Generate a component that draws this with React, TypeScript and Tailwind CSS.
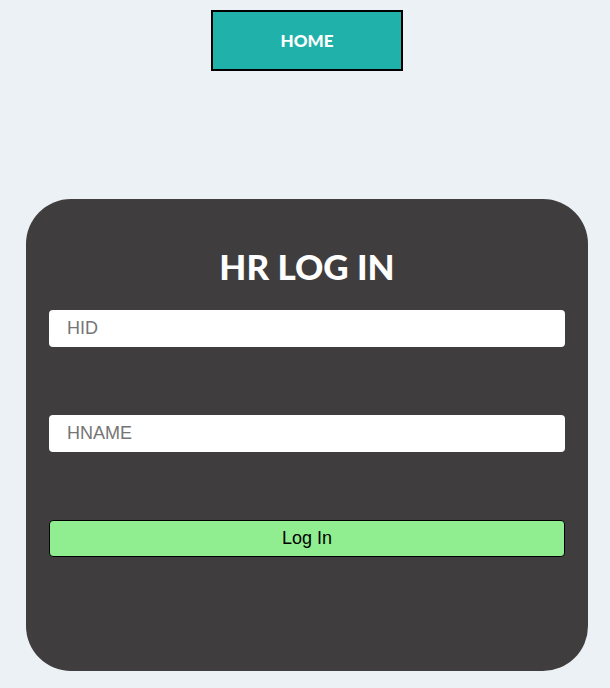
const field =
  'block h-[37px] w-full rounded bg-white px-[18px] text-lg text-black placeholder:text-[#757575] outline-none';

export default function App() {
  return (
    <main className="flex min-h-screen flex-col items-center bg-[#ebf1f4] pt-[10px] pr-[22px] pb-[17px] pl-[26px] font-['Liberation_Sans',Arial,sans-serif]">
      <button
        type="button"
        className="h-[61px] w-48 border-2 border-black bg-[#20b2aa] font-['Lato',sans-serif] text-[17px] font-black text-white"
      >
        HOME
      </button>

      <form
        className="mt-32 w-full rounded-[45px] bg-[#403d3e] px-[23px] pt-[43px] pb-[114px]"
        onSubmit={(event) => event.preventDefault()}
      >
        <h1 className="text-center font-['Lato',sans-serif] text-[35px] leading-[48px] font-black text-white">
          HR LOG IN
        </h1>
        <div className="mt-5 flex flex-col gap-[68px]">
          <input className={field} type="text" name="hid" placeholder="HID" aria-label="HID" />
          <input className={field} type="text" name="hname" placeholder="HNAME" aria-label="HNAME" />
          <button
            type="submit"
            className="h-[37px] w-full rounded border border-black bg-[#90ee90] pb-px text-lg text-black"
          >
            Log In
          </button>
        </div>
      </form>
    </main>
  );
}
